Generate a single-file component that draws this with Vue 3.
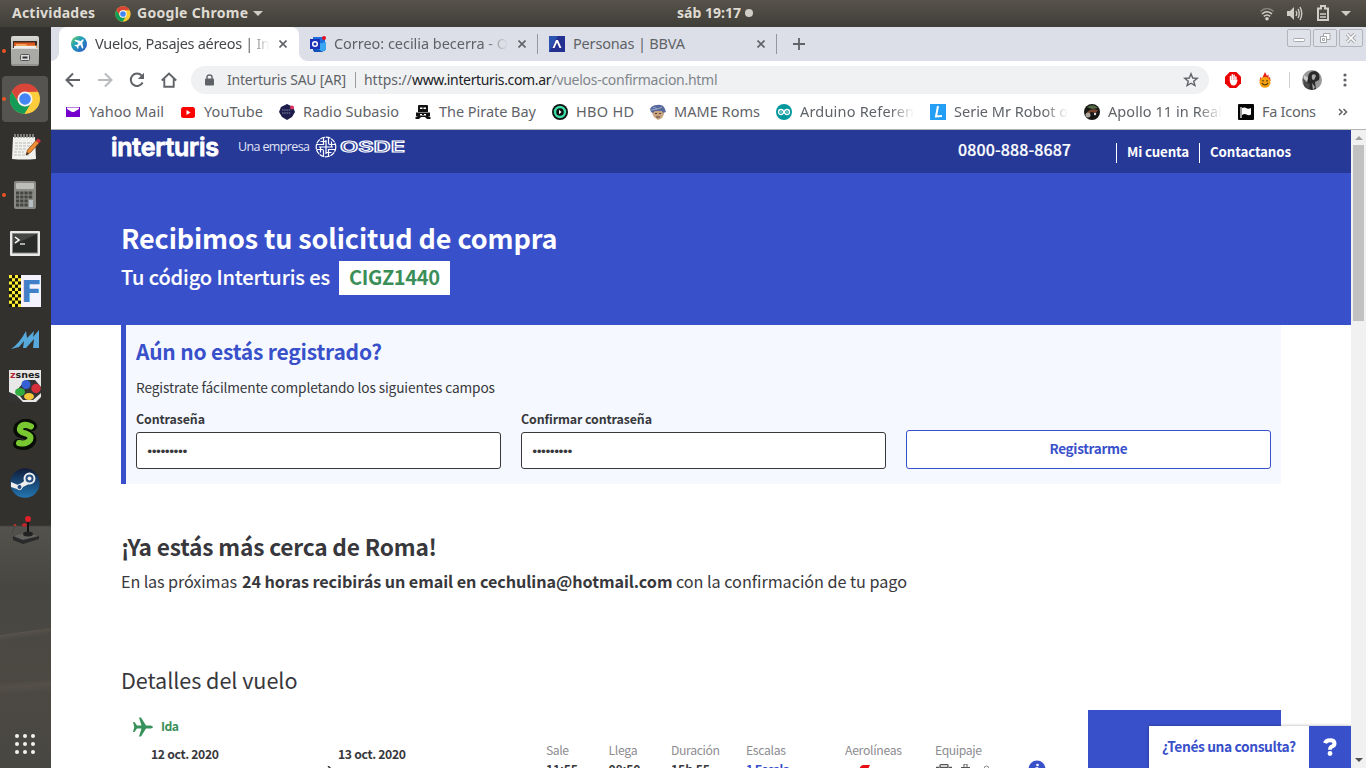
<script setup>
// Spreads the letters of a one-line label so that it fills the given width.
const vFit = {
  mounted(el, { value }) {
    const range = document.createRange()
    range.selectNodeContents(el)
    const natural = range.getBoundingClientRect().width
    el.style.letterSpacing = (value - natural) / Math.max(1, el.textContent.length - 1) + 'px'
    el.style.width = value + 'px'
  }
}

const bookmarks = [
  { icon: 'yahoo', label: 'Yahoo Mail', w: 75 },
  { icon: 'youtube', label: 'YouTube', w: 59 },
  { icon: 'radio', label: 'Radio Subasio', w: 96 },
  { icon: 'pirate', label: 'The Pirate Bay', w: 97 },
  { icon: 'hbo', label: 'HBO HD', w: 58 },
  { icon: 'mame', label: 'MAME Roms', w: 86 },
  { icon: 'arduino', label: 'Arduino Referen', w: 114, fade: true },
  { icon: 'serie', label: 'Serie Mr Robot o', w: 114, fade: true },
  { icon: 'apollo', label: 'Apollo 11 in Real', w: 114, fade: true },
  { icon: 'fa', label: 'Fa Icons', w: 54 }
]

const dock = [
  { id: 'files', run: true },
  { id: 'chrome', run: true, active: true },
  { id: 'notes' },
  { id: 'calc', run: true },
  { id: 'term' },
  { id: 'fceux' },
  { id: 'mupen' },
  { id: 'zsnes' },
  { id: 'scumm' },
  { id: 'steam' },
  { id: 'joystick' }
]

const checks = Array.from({ length: 40 }, (_, i) => ({ x: i % 4, y: Math.floor(i / 4) })).filter(c => (c.x + c.y) % 2 === 1)

const columns = [
  { label: 'Sale', w: 23, cell: 62.5, value: '11:55', vw: 32 },
  { label: 'Llega', w: 29, cell: 62.5, value: '08:50', vw: 32 },
  { label: 'Duración', w: 49, cell: 75, value: '15h 55', vw: 39 },
  { label: 'Escalas', w: 40, cell: 99, value: '1 Escala', vw: 44, link: true },
  { label: 'Aerolíneas', w: 57, cell: 90, icon: 'air' },
  { label: 'Equipaje', w: 47, cell: 93, icon: 'bags' }
]
</script>

<template>
  <div class="desktop">
    <header class="topbar">
      <span class="act" v-fit="83">Actividades</span>
      <svg class="tb-chrome" width="16" height="16" viewBox="0 0 48 48">
        <circle cx="24" cy="24" r="23" fill="#fbc933" />
        <path d="M4 12.500A23 23 0 0 1 44 12.500L24 13A11 11 0 0 0 14.500 29.500Z" fill="#db4437" />
        <path d="M4 12.500A23 23 0 0 0 23 47L33.500 29.500A11 11 0 0 1 14.500 29.500Z" fill="#0f9d58" />
        <circle cx="24" cy="24" r="11" fill="#fff" /><circle cx="24" cy="24" r="8.500" fill="#4285f4" />
      </svg>
      <span class="app" v-fit="111">Google Chrome</span>
      <i class="caret"></i>
      <div class="clock"><span v-fit="64">sáb 19:17</span><i></i></div>
      <div class="sys">
        <svg width="14" height="14" viewBox="0 0 14 14" fill="none" stroke="#d0cdc6" stroke-width="1.500">
          <path d="M.5 4.500Q7-1.500 13.500 4.500" stroke="#85827b" /><path d="M2 7Q7 2.500 12 7M3.800 9.400Q7 6.500 10.200 9.400" /><circle cx="7" cy="11.800" r="1.800" fill="#d0cdc6" stroke="none" />
        </svg>
        <svg class="vol" width="16" height="15" viewBox="0 0 16 15" fill="none" stroke="#d0cdc6" stroke-width="1.400">
          <path d="M0 5H3L7 1V14L3 10H0Z" fill="#d0cdc6" stroke="none" /><path d="M9 5Q10.500 7.500 9 10M11 3Q13.500 7.500 11 12M13 1Q16.500 7.500 13 14" />
        </svg>
        <svg class="bat" width="12" height="16" viewBox="0 0 12 16" fill="none" stroke="#d0cdc6" stroke-width="2">
          <path d="M1 3.500H4V1H8V3.500H11V15H1Z" /><path d="M3 9H9M3 12H9" stroke-width="1.500" />
        </svg>
        <i class="caret"></i>
      </div>
    </header>

    <div class="work">
      <nav class="dock">
        <div v-for="d in dock" :key="d.id" class="slot" :class="{ active: d.active }">
          <i v-if="d.run" class="run"></i>
          <svg v-if="d.id === 'files'" width="32" height="32" viewBox="0 0 32 32">
            <defs><linearGradient id="fg" x2="0" y2="1"><stop stop-color="#d8d8d6" /><stop offset="1" stop-color="#8f8f8c" /></linearGradient></defs>
            <rect x="2" y="1" width="28" height="30" rx="2" fill="url(#fg)" /><path d="M4 6H28V14H4Z" fill="#3b2a22" />
            <path d="M5 7.500H26V14H5Z" fill="#df5a1e" /><path d="M7 9H17L18 10.500H28V14H7Z" fill="#f4a35b" /><path d="M5 11H27V14H5Z" fill="#eee" />
            <path d="M3 13H29V29H3Z" fill="#a9a9a6" /><path d="M3 13.500H29" stroke="#ddd" /><rect x="11.500" y="19.500" width="9" height="6" rx="1" fill="#ddd" stroke="#555" /><path d="M13.500 22.500H18.500" stroke="#333" stroke-width="2" />
          </svg>
          <svg v-else-if="d.id === 'chrome'" width="32" height="32" viewBox="0 0 48 48">
            <circle cx="24" cy="24" r="22.500" fill="#fecd3e" /><path d="M4 13A22.500 22.500 0 0 1 44 13L24 13.500A11 11 0 0 0 14.500 29.500Z" fill="#da453a" />
            <path d="M4 13A22.500 22.500 0 0 0 23 46.500L33.500 29.500A11 11 0 0 1 14.500 29.500Z" fill="#149b58" />
            <circle cx="24" cy="24" r="11.300" fill="#f3f3f3" /><circle cx="24" cy="24" r="8.700" fill="#4485f5" />
          </svg>
          <svg v-else-if="d.id === 'notes'" width="32" height="32" viewBox="0 0 32 32">
            <path d="M4 6H26L27 28Q15 29 3 28Z" fill="#f1f1ed" /><path d="M6 3V7M9 3V7M12 3V7M15 3V7M18 3V7M21 3V7M24 3V7" stroke="#999" stroke-width="1.500" />
            <path d="M6 12H23M6 15H21M6 18H18M5 21H15M5 24H20" stroke="#bbb" stroke-dasharray="3 1" />
            <path d="M17 24L18.500 19L27 9.500L30 12L21.500 21.500Z" fill="#ef8f34" stroke="#8b4c18" stroke-width=".8" /><path d="M27 9.500L29 7.500L32 10L30 12Z" fill="#d92f3c" /><path d="M17 24L18 21L20 23Z" fill="#333" />
          </svg>
          <svg v-else-if="d.id === 'calc'" width="32" height="32" viewBox="0 0 32 32">
            <rect x="5" y="2" width="22" height="28" rx="2" fill="#898986" /><rect x="7" y="4" width="18" height="6" rx="1" fill="#bdbeba" />
            <path d="M7 14H24M7 18H24M7 22H19M7 26H19" stroke="#444541" stroke-width="2.800" stroke-dasharray="3.300 .9" /><rect x="20" y="21" width="4" height="7" fill="#b5bec3" />
          </svg>
          <svg v-else-if="d.id === 'term'" width="32" height="32" viewBox="0 0 32 32">
            <rect x="1" y="4" width="30" height="25" rx="1" fill="#e9e9e7" /><rect x="3.500" y="6.500" width="25" height="19.500" fill="#292b29" stroke="#888" /><path d="M4 7H28L4 18Z" fill="#454744" />
            <path d="M6 10L10 13L6 16" fill="none" stroke="#fff" stroke-width="1.500" /><path d="M11 17H16" stroke="#fff" stroke-width="1.200" />
          </svg>
          <svg v-else-if="d.id === 'fceux'" width="32" height="32" viewBox="0 0 32 32">
            <rect width="32" height="32" fill="#f3f2fd" /><rect width="12" height="32" fill="#ffee32" />
            <rect v-for="c in checks" :key="c.x + '-' + c.y" :x="c.x * 3" :y="c.y * 3.2" width="3" height="3.200" fill="#15150a" />
            <text x="13" y="26.500" font-family="Roboto, sans-serif" font-weight="900" font-size="31" textLength="18" lengthAdjust="spacingAndGlyphs" fill="#4180c8">F</text>
          </svg>
          <svg v-else-if="d.id === 'mupen'" width="32" height="32" viewBox="0 0 32 32">
            <path d="M2 26Q10 21 17 8L18 15L25 8L24 14L30 7V25H24L25 16L17 25H14L15 18L10 24Z" fill="#57a9dc" />
          </svg>
          <svg v-else-if="d.id === 'zsnes'" class="lift" width="32" height="32" viewBox="0 0 32 32">
            <rect width="32" height="32" fill="#e8e8e8" /><path d="M0 32V22L7 25L14 32ZM27 32L32 27V32Z" fill="#333" /><text x="1" y="8" font-family="DejaVu Sans, sans-serif" font-weight="bold" font-size="9" textLength="30" lengthAdjust="spacingAndGlyphs" fill="#222"><tspan fill="#b52532">z</tspan>snes</text>
            <path d="M7 21L17 10H26L32 17V23L24 30H14Z" fill="#333" /><circle cx="17" cy="14.500" r="4.500" fill="#355fd4" /><circle cx="27" cy="18.500" r="4.700" fill="#d62f3c" /><ellipse cx="11" cy="22" rx="5" ry="4" fill="#31ad3f" /><ellipse cx="20" cy="26.500" rx="5" ry="3.500" fill="#f4c53b" />
          </svg>
          <svg v-else-if="d.id === 'scumm'" width="32" height="32" viewBox="0 0 32 32">
            <g fill="none" stroke-linecap="round" stroke-linejoin="round"><path d="M23 7Q16 2 10 8Q7 14 16 15Q24 17 22 22Q18 28 9 25" stroke="#070d04" stroke-width="10" /><path d="M22 7.500Q15 4 11.500 8Q9 13 17 14.500Q23 16.500 21 21Q17 26 10 24" stroke="#79c832" stroke-width="6" /></g>
          </svg>
          <svg v-else-if="d.id === 'steam'" width="32" height="32" viewBox="0 0 32 32">
            <defs><linearGradient id="sg" x2="0" y2="1"><stop stop-color="#101c39" /><stop offset="1" stop-color="#2376b2" /></linearGradient></defs><circle cx="16" cy="16" r="14.700" fill="url(#sg)" />
            <path d="M2 15L9 18L14 15L18 11L22 16L14 20Q12 25 8 22L2 20Z" fill="#eee" /><circle cx="20.500" cy="11.500" r="5" fill="#234f80" stroke="#eee" stroke-width="2" /><circle cx="20.500" cy="11.500" r="2" fill="#eee" /><circle cx="10.500" cy="20" r="2.500" fill="#234f80" stroke="#eee" />
          </svg>
          <svg v-else width="32" height="32" viewBox="0 0 32 32">
            <path d="M4 21L17 17L30 21V24L14 29L4 25Z" fill="#292a29" /><path d="M4 21L17 17L30 21L14 25Z" fill="#62625f" /><path d="M6 10L3 19" stroke="#444" /><circle cx="6" cy="10" r="1.300" fill="#a33" /><path d="M19 5V19" stroke="#111" stroke-width="2" /><circle cx="19" cy="4" r="2.900" fill="#e31f28" /><ellipse cx="15.500" cy="10" rx="2.500" ry="1.700" fill="#c9242b" />
            <ellipse cx="19" cy="19" rx="5" ry="2.500" fill="#222" />
          </svg>
        </div>
        <div class="apps"><i v-for="n in 9" :key="n"></i></div>
      </nav>

      <section class="browser">
        <div class="tabs">
          <div class="tab on">
            <svg width="16" height="16" viewBox="0 0 16 16"><defs><linearGradient id="ig" x2="1" y2="1"><stop stop-color="#7ad45c" /><stop offset=".4" stop-color="#1f9fbb" /><stop offset="1" stop-color="#3050c5" /></linearGradient></defs><circle cx="8" cy="8" r="8" fill="url(#ig)" /><path d="M12.500 3.500Q11.500 2.800 9.800 5L4 3.800L3.500 4.800L7.500 7L6 9L4 8.800L3.500 9.800L5.800 10.800L6.500 12.700L7.500 12.200L7.400 10.400L9.300 8.800L11.300 12.700L12.300 12L11.300 6.500Q13.200 4.500 12.500 3.500Z" fill="#fff" /></svg>
            <span class="fade" v-fit="175">Vuelos, Pasajes aéreos | In</span>
            <svg class="x" width="8" height="8" viewBox="0 0 8 8"><path d="M.5 .5L7.500 7.500M7.500 .5L.5 7.500" stroke="#5f6368" stroke-width="1.600" /></svg>
          </div>
          <div class="tab two">
            <svg width="16" height="16" viewBox="0 0 16 16"><path d="M3 1H15V15H3Z" fill="#1d6fdc" /><path d="M7 8L16 6V14L11 16Z" fill="#3aa5f1" /><path d="M3 12L14 16H4Z" fill="#1350b5" /><rect y="3" width="10" height="10" fill="#1b32b8" /><circle cx="5" cy="8" r="2.300" fill="none" stroke="#fff" stroke-width="1.500" /><circle cx="14" cy="2" r="2" fill="#e81123" /></svg>
            <span class="fade" v-fit="174">Correo: cecilia becerra - O</span>
            <svg class="x" width="8" height="8" viewBox="0 0 8 8"><path d="M.5 .5L7.500 7.500M7.500 .5L.5 7.500" stroke="#5f6368" stroke-width="1.600" /></svg>
          </div>
          <i class="tsep"></i>
          <div class="tab three">
            <svg width="16" height="16" viewBox="0 0 16 16"><rect width="16" height="16" fill="#24308f" /><path d="M0 0H9L0 16Z" fill="#2c52b0" /><path d="M3.500 12L7 4H9L12.500 12H10.500L8 6.500L5.500 12Z" fill="#fff" /></svg>
            <span v-fit="112">Personas | BBVA</span>
            <svg class="x" width="8" height="8" viewBox="0 0 8 8"><path d="M.5 .5L7.500 7.500M7.500 .5L.5 7.500" stroke="#5f6368" stroke-width="1.600" /></svg>
          </div>
          <i class="tsep"></i>
          <svg class="plus" width="12" height="12" viewBox="0 0 12 12"><path d="M6 0V12M0 6H12" stroke="#5f6368" stroke-width="1.800" /></svg>
          <div class="wins">
            <span><svg width="12" height="12" viewBox="0 0 12 12"><rect x=".5" y="6.500" width="11" height="3" rx="1" fill="#fff" stroke="#a9aaaf" /></svg></span>
            <span><svg width="12" height="12" viewBox="0 0 12 12" fill="#fff" stroke="#a3a4a9"><path d="M4.500 1.500H11V7.500H4.500Z" /><path d="M1.500 4.500H7.500V10.500H1.500Z" /><path d="M3.500 6.500H5.500V8.500H3.500Z" /></svg></span>
            <span><svg width="12" height="12" viewBox="0 0 12 12"><path d="M2 2L10 10M10 2L2 10" stroke="#a3a4a9" stroke-width="3.500" /><path d="M2 2L10 10M10 2L2 10" stroke="#fff" stroke-width="1.700" /></svg></span>
          </div>
        </div>

        <div class="toolbar">
          <svg width="16" height="16" viewBox="0 0 16 16" fill="none" stroke="#5f6368" stroke-width="2"><path d="M15 8H2M8 1.500L1.500 8L8 14.500" /></svg>
          <svg width="16" height="16" viewBox="0 0 16 16" fill="none" stroke="#b8babd" stroke-width="2"><path d="M1 8H14M8 1.500L14.500 8L8 14.500" /></svg>
          <svg width="16" height="16" viewBox="0 0 16 16" fill="none" stroke="#5f6368" stroke-width="2"><path d="M13.600 10.500A6.200 6.200 0 1 1 12.700 3.700" /><path d="M15 .8V7H8.800Z" fill="#5f6368" stroke="none" /></svg>
          <svg width="16" height="16" viewBox="0 0 16 16" fill="none" stroke="#5f6368" stroke-width="1.900"><path d="M.8 8.500L8 1.500L15.200 8.500M3.300 7V14.800H12.700V7" /></svg>
          <div class="omni">
            <svg width="9" height="12" viewBox="0 0 9 12"><rect y="4.500" width="9" height="7" rx="1" fill="#5f6368" /><path d="M2 5V3Q2 1 4.500 1Q7 1 7 3V5" fill="none" stroke="#5f6368" stroke-width="1.400" /></svg>
            <span class="org" v-fit="119">Interturis SAU [AR]</span><i></i>
            <span class="sch" v-fit="48">https://</span><span class="host" v-fit="139.5">www.interturis.com.ar</span><span class="path" v-fit="166">/vuelos-confirmacion.html</span>
            <svg class="star" width="16" height="16" viewBox="0 0 16 16"><path d="M8 1.800L9.700 6L14.200 6.300L10.700 9.200L11.900 13.600L8 11.200L4.100 13.600L5.300 9.200L1.800 6.300L6.300 6Z" fill="none" stroke="#5f6368" stroke-width="1.400" /></svg>
          </div>
          <svg class="abp" width="16" height="16" viewBox="0 0 16 16"><path d="M4.700 0H11.300L16 4.700V11.300L11.300 16H4.700L0 11.300V4.700Z" fill="#ec0000" /><path d="M5.500 9V4.500M7.300 8V2.800M9.100 8V3.200M10.900 9V5" stroke="#fff" stroke-width="1.500" stroke-linecap="round" /><path d="M4.800 8H11.600L12.600 7.500Q12 13.500 8.500 13.500Q5 13.500 4.800 8Z" fill="#fff" /></svg>
          <svg class="fire" width="14" height="16" viewBox="0 0 14 16"><path d="M1.500 9L2.500 5L4 6.500L7 0L9 4L10.500 2.500V6L12 5L12.500 9Z" fill="#e81c12" /><circle cx="7" cy="10.300" r="5.500" fill="#f69f0c" /><path d="M5 8V9.500M9 8V9.500M3.800 11Q7 15 10.200 11" fill="none" stroke="#46330a" stroke-width="1.200" /></svg>
          <i class="vs"></i>
          <svg class="ava" width="20" height="20" viewBox="0 0 20 20"><defs><clipPath id="ac"><circle cx="10" cy="10" r="10" /></clipPath></defs><g clip-path="url(#ac)"><rect width="20" height="20" fill="#999" /><path d="M6 8Q6 1 13 1Q19 3 17 10L13 12L14 20H3L2 11L5 13Z" fill="#292929" /><path d="M10 5Q13 3 14 6L12 10Q9 10 10 5Z" fill="#a8a8a8" /><path d="M1 8L4 12L8 14L7 20H2Z" fill="#4b4b4b" /><path d="M2 5L6 8L5 11L2 9Z" fill="#ccc" /><path d="M10 13L13 17L11 20Z" fill="#aaa" /></g></svg>
          <svg class="menu" width="4" height="16" viewBox="0 0 4 16" fill="#5f6368"><circle cx="2" cy="3" r="1.600" /><circle cx="2" cy="8" r="1.600" /><circle cx="2" cy="13" r="1.600" /></svg>
        </div>

        <div class="bookmarks">
          <div v-for="b in bookmarks" :key="b.label" class="bm">
            <svg width="16" height="16" viewBox="0 0 16 16">
              <g v-if="b.icon === 'yahoo'"><rect x="1" y="3" width="14" height="10" fill="#7500cd" /><path d="M2 3.500H14V5L9 8H7L2 5Z" fill="#fff" /></g>
              <g v-else-if="b.icon === 'youtube'"><rect x="1" y="3" width="14" height="11" rx="2.500" fill="#f00" /><path d="M6.500 6L10.500 8.500L6.500 11Z" fill="#fff" /></g>
              <g v-else-if="b.icon === 'radio'"><path d="M8 0L14 3L16 8L13 13L8 16L3 13L0 8L2 3Z" fill="#1c1d4b" /><path d="M3 6H12M3 9H12" stroke="#8487b0" stroke-dasharray="1.500 .7" /><circle cx="13" cy="3.500" r="2" fill="#e03060" /></g>
              <g v-else-if="b.icon === 'pirate'"><path d="M4 1H12Q13 1 13 2V8H3V2Q3 1 4 1ZM1 8.500H15V12H13L15.500 13V15H12L10 13H6L4 15H.5V13L3 12H1Z" fill="#111" /><path d="M5 3.500H11V5H5ZM5 10H11V11.500H5Z" fill="#fff" /><path d="M7 4H9M7 10.500H9" stroke="#111" /></g>
              <g v-else-if="b.icon === 'hbo'"><circle cx="8" cy="8" r="8" fill="#111" /><circle cx="8" cy="8" r="5" fill="none" stroke="#3cdda8" stroke-width="2.400" /><path d="M7 5.800L9.500 8L7 10.200Z" fill="#fff" /></g>
              <g v-else-if="b.icon === 'mame'"><path d="M3 6H13L14 10L12 14L8 16L4 13L2 9Z" fill="#c9a27e" /><path d="M0 5Q2 1 7 1Q13 0 15 5L16 8L13 9L12 7H5L3 9L1 8Z" fill="#56699a" /><path d="M3 3L8 5L12 3M1 6L7 5" fill="none" stroke="#aab6d8" stroke-width=".8" /><path d="M5 9.500H7M9 9.500H11M6 13H10" stroke="#544" /></g>
              <g v-else-if="b.icon === 'arduino'"><circle cx="8" cy="8" r="8" fill="#00979d" /><g fill="none" stroke="#fff" stroke-width="1.300"><circle cx="5" cy="8" r="2.500" /><circle cx="11" cy="8" r="2.500" /></g><path d="M4 8H6M10 8H12" stroke="#fff" stroke-width=".8" /></g>
              <g v-else-if="b.icon === 'serie'"><rect width="16" height="16" fill="#249ff5" /><path d="M8 2L6 12.500L12 12" fill="none" stroke="#fff" stroke-width="2" /></g>
              <g v-else-if="b.icon === 'apollo'"><circle cx="8" cy="8" r="8" fill="#171815" /><path d="M3 3Q9-1 14 4L8 5Z" fill="#526b46" /><path d="M3 8Q7 4 14 6L12 9L7 8L4 11Z" fill="#78432f" /><circle cx="4" cy="11" r="2.500" fill="#aaa49c" /><circle cx="11" cy="10" r="1.200" fill="#ddd" /></g>
              <g v-else><rect width="16" height="16" rx="1" fill="#050505" /><path d="M3 3V14" stroke="#fff" stroke-width="1.200" /><path d="M4 4Q7 3 9 4.500Q11 5 13 4V10.500Q11 12 8.500 10.500Q6.500 9.500 4 11Z" fill="#fff" /></g>
            </svg>
            <span :class="{ fade: b.fade }" v-fit="b.w">{{ b.label }}</span>
          </div>
          <svg class="more" width="10" height="8" viewBox="0 0 10 8"><path d="M1 1L4 4L1 7M5.500 1L8.500 4L5.500 7" fill="none" stroke="#5f6368" stroke-width="1.500" /></svg>
        </div>

        <div class="view">
          <main class="page">
            <div class="phead">
              <span class="brand" v-fit="108">interturis</span>
              <span class="una" v-fit="72">Una empresa</span>
              <svg class="osde" width="91" height="22" viewBox="0 0 91 22" fill="none" stroke="#fff">
                <g stroke-width="1.200"><circle cx="11" cy="11" r="9.800" stroke-dasharray="5 .7" /><path d="M8.500 1.500V8.500H1.500M13.500 20.500V13.500H20.500M8.500 20.500V15Q8.500 13.500 7 13.500H1.500M13.500 1.500V7Q13.500 8.500 15 8.500H20.500M11 4V18M4 11H18M5.500 16.500V11M16.500 5.500V11M5.500 5.500H11M11 16.500H16.500" /></g>
                <text x="25" y="15.500" font-family="Inter, sans-serif" font-weight="600" font-size="14.500" textLength="65" lengthAdjust="spacingAndGlyphs" stroke-width="1">OSDE</text>
              </svg>
              <span class="phone" v-fit="113">0800-888-8687</span>
              <a class="link cuenta"><span v-fit="62">Mi cuenta</span></a>
              <a class="link"><span v-fit="81">Contactanos</span></a>
            </div>
            <div class="hero">
              <h1 v-fit="436.5">Recibimos tu solicitud de compra</h1>
              <div class="code"><span class="lead" v-fit="209">Tu código Interturis es</span><b><span v-fit="91">CIGZ1440</span></b></div>
            </div>
            <div class="wrap">
              <form class="reg">
                <h2 v-fit="246">Aún no estás registrado?</h2>
                <p v-fit="359">Registrate fácilmente completando los siguientes campos</p>
                <div class="fields">
                  <label><span v-fit="69">Contraseña</span><div class="input"><span v-fit="42.5">•••••••••</span></div></label>
                  <label><span v-fit="131">Confirmar contraseña</span><div class="input"><span v-fit="42.5">•••••••••</span></div></label>
                  <div class="btn"><span v-fit="78">Registrarme</span></div>
                </div>
              </form>
              <h3 v-fit="316">¡Ya estás más cerca de Roma!</h3>
              <p class="mail"><span v-fit="116">En las próximas</span><b v-fit="430.5">24 horas recibirás un email en cechulina@hotmail.com</b><span v-fit="231">con la confirmación de tu pago</span></p>
              <h4 v-fit="176.5">Detalles del vuelo</h4>
              <div class="flight">
                <div class="legs">
                  <div class="ida"><svg width="20" height="20" viewBox="0 0 20 20"><path d="M0 5H1.500L4 8.500H8.500L6 .5H8L13 8.500H17.500Q20 9 20 10Q20 11 17.500 11.500H13L8 19.500H6L8.500 11.500H4L1.500 15H0L1.300 10Z" fill="#36915a" /></svg><span v-fit="18">Ida</span></div>
                  <div class="row">
                    <span class="date" v-fit="68">12 oct. 2020</span>
                    <svg class="arr" width="10" height="8" viewBox="0 0 10 8"><path d="M4 0L7 3" stroke="#333" stroke-width="1.500" /></svg>
                    <span class="date" v-fit="68">13 oct. 2020</span>
                    <div class="cols">
                      <div v-for="c in columns" :key="c.label" class="col" :style="{ width: c.cell + 'px' }">
                        <span class="lab" v-fit="c.w">{{ c.label }}</span>
                        <span v-if="c.value" class="val" :class="{ blue: c.link }" v-fit="c.vw">{{ c.value }}</span>
                        <svg v-else-if="c.icon === 'air'" class="air" width="14" height="8" viewBox="0 0 14 8"><path d="M0 4L2 1Q3 0 5 0H11L9 4Z" fill="#e80c14" /></svg>
                        <svg v-else class="bags" width="60" height="8" viewBox="0 0 60 8" fill="none" stroke="#555"><path d="M1 3.500H4M14 3.500H17M5 4V1.500Q5 .7 6 .7H12Q13 .7 13 1.500V4M5 3.500H13" stroke-width="1.300" /><path d="M29 4V0H32V4M26 3.500H35" /><path d="M49 5Q49 2 51.500 2Q54 2 54 5" stroke="#888" /></svg>
                      </div>
                      <svg class="info" width="18" height="18" viewBox="0 0 18 18"><circle cx="9" cy="9" r="8.500" fill="#3950cb" /><circle cx="9.500" cy="5" r="1.300" fill="#fff" /><path d="M7.500 8H9.500V13" stroke="#fff" stroke-width="1.700" fill="none" /></svg>
                    </div>
                  </div>
                </div>
                <aside class="total"></aside>
              </div>
            </div>
          </main>
          <div class="scroll"><i class="up"></i><i class="thumb"></i><i class="down"></i></div>
          <div class="chat"><span class="ask"><span v-fit="134">¿Tenés una consulta?</span></span><span class="q"><svg width="14" height="18" viewBox="0 0 14 18"><path d="M2 5.200Q3 2.200 7 2.200Q11.500 2.200 11.500 5.500Q11.500 7.500 9 8.500Q7 9.300 7 11.800" fill="none" stroke="#fff" stroke-width="4" /><circle cx="7" cy="15.500" r="2.400" fill="#fff" /></svg></span></div>
        </div>
      </section>
    </div>
  </div>
</template>

<style>
body { margin: 0; overflow: hidden; }
</style>

<style scoped>
* { box-sizing: border-box; }
h1, h2, h3, h4, p { margin: 0; white-space: nowrap; }
i { font-style: normal; display: block; }
svg { flex: none; display: block; }
span { white-space: nowrap; flex: none; display: block; }
.desktop { width: 1366px; height: 768px; display: flex; flex-direction: column; overflow: hidden; font-family: "Noto Sans", sans-serif; background: #fff; }
.topbar { height: 27px; flex: none; display: flex; align-items: center; background: linear-gradient(#57534b, #403e38); color: #dfdbd2; font-weight: 700; font-size: 14px; line-height: 26px; padding-left: 12px; position: relative; }
.topbar > span, .clock span { padding-bottom: 1px; }
.tb-chrome { margin-left: 20px; margin-right: 6px; }
.caret { width: 0; height: 0; border: 5px solid transparent; border-top-color: #d0cdc6; border-bottom: 0; margin-left: 5px; }
.clock { display: flex; align-items: center; position: absolute; left: 677px; top: 0; }
.clock i { width: 8px; height: 8px; border-radius: 50%; background: #d0cdc6; margin-left: 4px; margin-bottom: 1px; }
.sys { margin-left: auto; display: flex; align-items: center; padding-right: 15px; }
.vol { margin-left: 13px; }
.bat { margin-left: 14px; margin-bottom: 1px; }
.sys .caret { margin-left: 12px; }
.work { flex: 1; display: flex; min-height: 0; }
.dock { width: 51px; flex: none; display: flex; flex-direction: column; position: relative;
  background: linear-gradient(172deg, transparent 49%, rgba(110, 100, 90, .35) 50%, transparent 56%) 0 560px / 51px 90px no-repeat, linear-gradient(176deg, transparent 40%, rgba(110, 100, 90, .25) 48%, transparent 60%) 0 630px / 51px 60px no-repeat, linear-gradient(#33312d 498px, #54524c 500px, #474640 560px, #4c4943 640px, #494741 100%); }
.slot { height: 48px; flex: none; display: flex; align-items: center; justify-content: center; padding-right: 1px; position: relative; }
.slot.active::before { content: ""; position: absolute; left: 2px; top: 1px; width: 46px; height: 46px; border-radius: 4px; background: #565450; }
.slot svg { position: relative; }
.slot .lift { margin-bottom: 2px; }
.run { position: absolute; left: 2px; top: 22px; width: 4px; height: 4px; border-radius: 50%; background: #e95420; }
.apps { display: grid; grid-template-columns: repeat(3, 4px); gap: 4px; margin: auto 0 14px 15px; }
.apps i { width: 4px; height: 4px; border-radius: 50%; background: #f2f2f0; }
.browser { flex: 1; min-width: 0; display: flex; flex-direction: column; }
.tabs { height: 34px; flex: none; background: #dcdfe7; display: flex; align-items: center; padding-left: 8px; font-size: 14.500px; color: #5f6368; }
.tab { display: flex; align-items: center; height: 34px; line-height: 31px; }
.tab span { margin-left: 8px; padding-bottom: 1px; }
.tab.on { width: 240px; padding-left: 12px; background: #fff; border-radius: 8px 8px 0 0; color: #45474a; position: relative; }
.tab.on::before, .tab.on::after { content: ""; position: absolute; bottom: 0; width: 8px; height: 8px; }
.tab.on::before { left: -8px; background: radial-gradient(circle at 0 0, transparent 7.500px, #fff 8px); }
.tab.on::after { right: -8px; background: radial-gradient(circle at 100% 0, transparent 7.500px, #fff 8px); }
.tab .x { margin-left: 9px; }
.tab.two { padding-left: 11px; }
.tab.two .x { margin-left: 10px; }
.tab.three { padding-left: 11px; }
.tab.three .x { margin-left: 72px; }
.tsep { width: 1px; height: 20px; background: #94979d; margin-left: 11px; }
.plus { margin-left: 16px; }
.fade { -webkit-mask-image: linear-gradient(90deg, #000 calc(100% - 24px), transparent); mask-image: linear-gradient(90deg, #000 calc(100% - 24px), transparent); overflow: hidden; }
.wins { margin-left: auto; align-self: flex-start; display: flex; gap: 2px; padding: 2px 3px 0 0; }
.wins span { width: 24px; height: 18px; border: 1px solid #b3b4b9; border-radius: 2px; display: flex; align-items: center; justify-content: center; background: #e0e2e9; }
.toolbar { height: 38px; flex: none; display: flex; align-items: center; padding-left: 14px; gap: 16px; }
.omni { height: 28px; width: 1018px; margin-left: -2px; border-radius: 14px; background: #f0f1f3; display: flex; align-items: center; padding-left: 14px; font-size: 14px; line-height: 26px; color: #5f6368; }
.org { margin-left: 13px; }
.omni i { width: 1px; height: 16px; background: #9a9ca0; margin: 0 8px 0 9px; }
.host { color: #202124; }
.path { color: #80868b; }
.star { margin-left: auto; margin-right: 10px; }
.fire { margin-left: 1px; }
.vs { width: 1px; height: 16px; background: #cfd1d4; margin-left: 1px; }
.ava { margin-left: -4px; }
.menu { margin-left: 5px; }
.bookmarks { height: 31px; flex: none; display: flex; align-items: center; gap: 16px; padding-left: 14px; padding-bottom: 4px; border-bottom: 1px solid #b3b3b3; font-size: 14.500px; line-height: 23px; color: #5f6368; }
.bm { display: flex; align-items: center; gap: 8px; flex: none; }
.bm span { padding-bottom: 2px; }
.more { margin-left: 6px; }
.view { height: 638px; flex: 1; display: flex; position: relative; overflow: hidden; }
.page { width: 1300px; flex: none; font-family: "Noto Sans CJK SC", "Noto Sans", sans-serif; color: #38383c; background: #fff; }
.phead { height: 43px; background: #263997; color: #fff; display: flex; align-items: flex-start; padding-left: 60px; }
.brand { font: 600 25px/28px "Inter", sans-serif; margin-top: 3px; -webkit-text-stroke: .8px #fff; }
.una { font: 400 12.500px/20px "Open Sans", sans-serif; margin: 7px 5px 0 19px; color: #e0e4f5; }
.osde { margin-top: 6px; }
.phone { font-size: 16px; line-height: 24px; font-weight: 500; margin: 7px 45px 0 552px; -webkit-text-stroke: .2px #fff; }
.link { display: flex; border-left: 1px solid #fff; padding-left: 10px; height: 20px; margin-top: 13px; font-size: 13.300px; line-height: 17px; font-weight: 700; }
.cuenta { margin-right: 10px; }
.hero { height: 152px; background: #3950cb; color: #fff; padding: 47px 0 0 70px; }
h1 { font-size: 27px; line-height: 36px; font-weight: 700; }
.code { display: flex; margin-top: 5px; height: 34px; font-size: 20px; line-height: 31px; font-weight: 500; }
.lead { -webkit-text-stroke: .12px #fff; }
.code b { background: #fff; color: #3a8f58; padding: 0 10px; margin-left: 9px; font-weight: 700; }
.wrap { width: 1160px; margin-left: 70px; }
.reg { display: block; height: 159px; background: #f5f9ff; border-left: 5px solid #3950cb; padding: 11px 10px 0; }
h2 { color: #3950cb; font-size: 21px; line-height: 30px; font-weight: 700; }
.reg p { font-size: 13.700px; line-height: 20px; margin-top: 11px; }
.fields { display: grid; grid-template-columns: repeat(3, 365px); column-gap: 20px; align-items: end; margin-top: 13px; }
label { display: block; font-size: 12.400px; line-height: 18px; font-weight: 700; }
.input { margin-top: 4px; height: 37px; border: 1px solid #38383c; border-radius: 3px; background: #fff; display: flex; align-items: center; padding: 2px 0 0 9px; font: 12.500px/14px "DejaVu Sans", sans-serif; }
.btn { height: 39px; border: 1px solid #3950cb; border-radius: 3px; background: #fff; color: #3950cb; font-size: 13.500px; font-weight: 700; line-height: 34px; display: flex; justify-content: center; }
h3 { font-size: 22.700px; line-height: 32px; margin-top: 47px; }
.mail { display: flex; font-size: 16.200px; line-height: 24px; margin-top: 6px; }
.mail b { margin: 0 4px 0 5px; flex: none; }
.mail span:last-child { margin-left: -.5px; }
h4 { font-size: 21.600px; line-height: 30px; font-weight: 400; margin-top: 72px; }
.flight { display: flex; margin-top: 15px; height: 200px; }
.legs { width: 967px; flex: none; padding: 7px 0 0 12px; font-size: 12.200px; line-height: 18px; }
.ida { display: flex; height: 20px; align-items: flex-start; color: #3a8f58; font-weight: 700; gap: 8px; }
.row { display: flex; margin: 4px 0 0 18px; }
.date { font-weight: 700; margin-top: 4px; }
.arr { margin: 25px 54px 0 105px; width: 10px; }
.row .arr + .date { margin-left: -50px; }
.cols { display: flex; margin-left: 140px; }
.col { flex: none; }
.lab { color: #8c8c90; }
.val { font-weight: 700; margin-top: 1px; }
.blue { color: #3950cb; }
.air { margin: 6px 0 0 14px; }
.bags { margin-top: 5px; }
.info { margin-top: 19px; }
.total { width: 193px; background: #3950cb; }
.scroll { width: 15px; flex: none; background: #f1f1f1; display: flex; flex-direction: column; align-items: center; }
.up { border: 4px solid transparent; border-top: 0; border-bottom-color: #a0a0a0; margin: 6px 0 5px; }
.thumb { width: 11px; height: 176px; background: #c1c1c1; }
.down { border: 4px solid transparent; border-bottom: 0; border-top-color: #505050; margin: auto 0 6px; }
.chat { position: absolute; right: 15px; bottom: 0; height: 42px; display: flex; background: #fff; box-shadow: 0 0 3px rgba(0, 0, 0, .35); font: 700 13.800px/41px "Noto Sans CJK SC", sans-serif; color: #3950cb; clip-path: inset(-4px 0 0 -4px); }
.ask { width: 160px; padding-left: 13px; }
.q { width: 42px; background: #3950cb; display: flex; align-items: center; justify-content: center; }
</style>
